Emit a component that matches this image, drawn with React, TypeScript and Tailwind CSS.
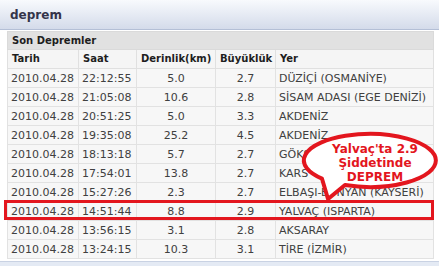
import React from "react";

const rows: [string, string, string, string, string][] = [
  ["2010.04.28", "22:12:55", "5.0", "2.7", "DÜZİÇİ (OSMANİYE)"],
  ["2010.04.28", "21:05:08", "10.6", "2.8", "SİSAM ADASI (EGE DENİZİ)"],
  ["2010.04.28", "20:51:25", "5.0", "3.3", "AKDENİZ"],
  ["2010.04.28", "19:35:08", "25.2", "4.5", "AKDENİZ"],
  ["2010.04.28", "18:13:18", "5.7", "2.7", "GÖKSUN (KAHRAMANMARAŞ)"],
  ["2010.04.28", "17:54:01", "13.8", "2.7", "KARS"],
  ["2010.04.28", "15:27:26", "2.3", "2.7", "ELBAŞI-BÜNYAN (KAYSERİ)"],
  ["2010.04.28", "14:51:44", "8.8", "2.9", "YALVAÇ (ISPARTA)"],
  ["2010.04.28", "13:56:15", "3.1", "2.8", "AKSARAY"],
  ["2010.04.28", "13:24:15", "10.3", "3.1", "TİRE (İZMİR)"],
];

export default function App() {
  return (
    <div className="relative w-[439px] h-[266px] overflow-hidden bg-white font-['DejaVu_Sans',sans-serif]">
      <div className="h-[30px] bg-gradient-to-b from-[#f8fafd] to-[#d4dbea] border-b border-[#b4bfd6] flex items-center px-[10px]">
        <span className="text-[12px] font-bold text-[#34344a] leading-none">deprem</span>
      </div>
      <div className="pl-[7px] pt-[1px]">
        <table className="table-fixed border-collapse w-[426px]">
          <colgroup>
            <col className="w-[71px]" />
            <col className="w-[58px]" />
            <col className="w-[79px]" />
            <col className="w-[60px]" />
            <col className="w-[158px]" />
          </colgroup>
          <tbody>
            <tr className="h-[18px] bg-[#e1e1e1]">
              <td colSpan={5} className="px-[4px] p-0 text-[10px] font-bold text-[#1e1e1e] border border-[#dadada] leading-none">
                Son Depremler
              </td>
            </tr>
            <tr className="h-[19px] bg-[#f5f5f5] text-[10px] font-bold text-[#1e1e1e] leading-none">
              <td className="px-[4px] border border-[#e0e0e0]">Tarih</td>
              <td className="px-[4px] border border-[#e0e0e0]">Saat</td>
              <td className="px-[4px] border border-[#e0e0e0]">Derinlik(km)</td>
              <td className="px-[4px] border border-[#e0e0e0]">Büyüklük</td>
              <td className="px-[4px] border border-[#e0e0e0]">Yer</td>
            </tr>
            {rows.map((r, i) => (
              <tr key={i} className="h-[19px] bg-[#f7f7f7] text-[11px] text-[#404040] leading-none">
                <td className="px-[3px] border border-[#e2e2e2] whitespace-nowrap">{r[0]}</td>
                <td className="px-[3px] border border-[#e2e2e2] whitespace-nowrap">{r[1]}</td>
                <td className="px-[3px] border border-[#e2e2e2] text-center">{r[2]}</td>
                <td className="px-[3px] border border-[#e2e2e2] text-center">{r[3]}</td>
                <td className="px-[3px] border border-[#e2e2e2] whitespace-nowrap overflow-hidden">{r[4]}</td>
              </tr>
            ))}
          </tbody>
        </table>
      </div>
      <div className="mt-[2px] h-[8px] bg-[#e4eaf4] border-t border-[#c9d2e3]" />

      {/* highlight box */}
      <div className="absolute left-[4px] top-[200px] w-[430px] h-[20px] border-[3px] border-[#e3161e]" />

      {/* callout bubble */}
      <svg className="absolute left-0 top-0" width="439" height="266" viewBox="0 0 439 266">
        <path
          d="M 322 178.7 A 66 26.5 0 1 1 345 185 L 328 199 Z"
          fill="#ffffff"
          stroke="#e3161e"
          strokeWidth="4"
          strokeLinejoin="round"
        />
      </svg>
      <div className="absolute left-[315px] top-[142px] w-[120px] text-center text-[12px] font-bold leading-[14px] text-[#e3161e]">
        <div>Yalvaç'ta 2.9</div>
        <div>Şiddetinde</div>
        <div>DEPREM</div>
      </div>
    </div>
  );
}
